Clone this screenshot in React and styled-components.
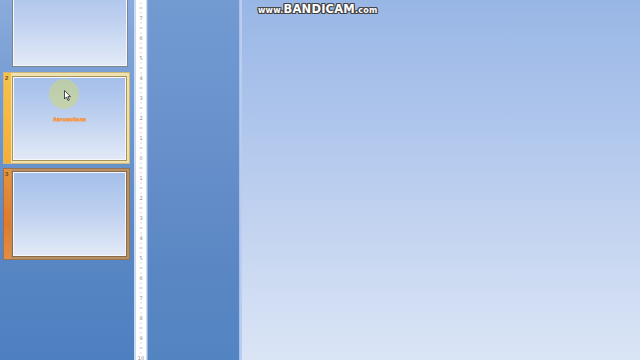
import React from "react";
import styled, { createGlobalStyle } from "styled-components";

const Global = createGlobalStyle`
  html, body { margin: 0; padding: 0; overflow: hidden; }
  body { font-family: "Liberation Sans", Arial, sans-serif; }
  *, *::before, *::after { box-sizing: border-box; }
`;

const Screen = styled.div`
  width: 640px;
  height: 360px;
  display: flex;
  overflow: hidden;
  position: relative;
`;

const SlidePanel = styled.div`
  width: 134px;
  flex: none;
  background: linear-gradient(180deg, #8aabdc 0%, #6f97cf 35%, #5a88c5 65%, #4e7fbf 100%);
  display: flex;
  flex-direction: column;
  padding-left: 3px;
  overflow: hidden;
`;

const List = styled.div`
  margin-top: -24px;
  display: flex;
  flex-direction: column;
  gap: 4px;
`;

const ThumbRow = styled.div`
  width: 127px;
  height: 92px;
  display: flex;
  border: 1px solid ${(p) => p.$frame || "transparent"};
  background: ${(p) => p.$frameFill || "transparent"};
  position: relative;
`;

const Strip = styled.div`
  width: 7px;
  flex: none;
  background: ${(p) => p.$color || "transparent"};
  position: relative;
`;

const Num = styled.span`
  position: absolute;
  left: 1px;
  top: 2px;
  font-size: 6px;
  font-weight: bold;
  color: #6a4a20;
`;

const Slide = styled.div`
  flex: 1;
  margin: ${(p) => p.$margin || "2px 1px 2px 1px"};
  border: 1px solid ${(p) => p.$edge || "#7d8593"};
  box-shadow: inset 0 0 0 1px #f4f7fc;
  background: linear-gradient(180deg, #a4bfeb 0%, #bccfef 45%, #e3eaf7 100%);
  position: relative;
  display: flex;
  align-items: center;
  justify-content: center;
`;

const Title = styled.span`
  font-size: 5px;
  font-weight: bold;
  color: #f5882c;
  letter-spacing: 0.2px;
  text-shadow: 0 0 1px #f9b070, 0 1px 1px #f0a060;
  margin-top: 0px;
`;

const Click = styled.div`
  position: absolute;
  left: 36px;
  top: 2px;
  width: 30px;
  height: 30px;
  border-radius: 50%;
  background: rgba(205, 215, 120, 0.55);
`;

const Cursor = styled.svg`
  position: absolute;
  left: 51px;
  top: 13px;
`;

const Ruler = styled.div`
  width: 14px;
  flex: none;
  background: #c9daf1;
  display: flex;
  justify-content: center;
  border-right: 1px solid #8fb0dc;
`;

const RulerStrip = styled.svg`
  display: block;
`;

const MidPane = styled.div`
  width: 92px;
  flex: none;
  background: linear-gradient(180deg, #739bd2 0%, #6890cb 40%, #5a87c4 75%, #5384c2 100%);
  border-right: 1px solid #a9c1e8;
`;

const Canvas = styled.div`
  flex: 1;
  background: linear-gradient(180deg, #98b6e5 0%, #afc6ec 35%, #c8d7f1 70%, #dae4f5 100%);
  border-left: 2px solid #b8cdef;
  position: relative;
`;

const Watermark = styled.div`
  position: absolute;
  left: 16px;
  top: 2px;
  font-family: "DejaVu Sans", "Liberation Sans", sans-serif;
  font-weight: bold;
  color: #ffffff;
  white-space: nowrap;
  letter-spacing: 0.2px;
  text-shadow: -1px 0 #444, 1px 0 #444, 0 -1px #444, 0 1px #444,
    -1px -1px #444, 1px 1px #444, -1px 1px #444, 1px -1px #444;
  font-size: 8px;
`;

const Big = styled.span`
  font-size: 11.5px;
`;

function RulerDrawing() {
  const ticks = [];
  const labels = [];
  for (let y = -2; y < 360; y += 5) {
    const idx = Math.round((y + 2) / 5);
    if (idx % 4 === 0) {
      if (y < 6) continue;
      const n = Math.abs(8 - idx / 4);
      labels.push(
        <text key={"l" + y} x="5" y={y + 2} fontSize="5" fill="#8a8a8a" textAnchor="middle" fontFamily="DejaVu Sans, sans-serif">
          {n}
        </text>
      );
    } else if (idx % 2 === 0) {
      ticks.push(<line key={"t" + y} x1="3.5" x2="6.5" y1={y} y2={y} stroke="#9a9a9a" strokeWidth="0.7" />);
    } else {
      ticks.push(<line key={"t" + y} x1="4.5" x2="5.5" y1={y} y2={y} stroke="#9a9a9a" strokeWidth="0.7" />);
    }
  }
  return (
    <RulerStrip width="10" height="360" viewBox="0 0 10 360">
      <rect x="0" y="0" width="10" height="360" fill="#ffffff" />
      {ticks}
      {labels}
    </RulerStrip>
  );
}

export default function App() {
  return (
    <>
      <Global />
      <Screen>
        <SlidePanel>
          <List>
            <ThumbRow>
              <Strip />
              <Slide $margin="0 1px 0 1px" />
            </ThumbRow>
            <ThumbRow $frame="#cdb879" $frameFill="#efe2b0">
              <Strip $color="linear-gradient(180deg,#f8c24a,#f5ad35)">
                <Num>2</Num>
              </Strip>
              <Slide $margin="3px 2px 2px 1px" $edge="#a89458">
                <Click />
                <Cursor width="7" height="11" viewBox="0 0 7 11">
                  <path d="M0.5 0.5 L0.5 9 L2.5 7 L4 10.5 L5.3 9.9 L3.9 6.6 L6.5 6.6 Z" fill="#fff" stroke="#222" strokeWidth="0.8" />
                </Cursor>
                <Title>Автомобили</Title>
              </Slide>
            </ThumbRow>
            <ThumbRow $frame="#9a7450" $frameFill="#b79066">
              <Strip $color="linear-gradient(180deg,#e8923c,#e07a2a 60%,#e48d44)">
                <Num>3</Num>
              </Strip>
              <Slide $margin="2px 2px 2px 1px" $edge="#8a6a48" />
            </ThumbRow>
          </List>
        </SlidePanel>
        <Ruler>
          <RulerDrawing />
        </Ruler>
        <MidPane />
        <Canvas>
          <Watermark>
            www.<Big>BANDICAM</Big>.com
          </Watermark>
        </Canvas>
      </Screen>
    </>
  );
}
